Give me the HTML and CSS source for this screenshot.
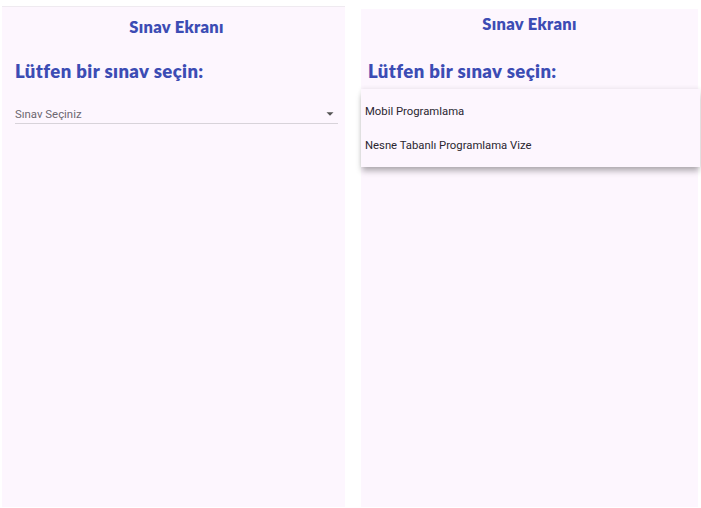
FILE: index.html
```html
<!DOCTYPE html>
<html lang="tr">
<head>
<meta charset="utf-8">
<title>Sınav Ekranı</title>
<link rel="stylesheet" href="styles.css">
</head>
<body>
  <div class="screens">
    <section class="panel panel-left">
      <h1 class="title">Sınav Ekranı</h1>
      <h2 class="heading">Lütfen bir sınav seçin:</h2>
      <div class="dropdown">
        <span class="dropdown-hint">Sınav Seçiniz</span>
        <svg class="dropdown-arrow" width="10" height="6" viewBox="0 0 10 6"><path d="M1.5 1.2 L8.5 1.2 L5 4.8 Z" fill="#555"/></svg>
      </div>
    </section>
    <section class="panel panel-right">
      <h1 class="title">Sınav Ekranı</h1>
      <h2 class="heading heading-right">Lütfen bir sınav seçin:</h2>
      <div class="menu">
        <div class="menu-item">Mobil Programlama</div>
        <div class="menu-item">Nesne Tabanlı Programlama Vize</div>
      </div>
    </section>
  </div>
</body>
</html>
```

FILE: styles.css
```css
html, body {
  margin: 0;
  padding: 0;
  background: #ffffff;
  height: 100%;
}
.screens {
  display: flex;
  align-items: flex-start;
  height: 508px;
}
.panel {
  background: #fdf6fe;
  box-sizing: border-box;
  position: relative;
}
.panel-left {
  margin-left: 2px;
  margin-top: 6px;
  width: 343px;
  height: 501px;
  border-top: 1px solid #efeaf0;
  padding: 0 7px 0 13px;
}
.panel-right {
  margin-left: 16px;
  margin-top: 9px;
  width: 337px;
  height: 498px;
  padding: 0 7px;
}
.title {
  margin: 0;
  text-align: center;
  font-family: "Lato", "Noto Sans", sans-serif;
  font-weight: 800;
  font-size: 16.5px;
  line-height: 20px;
  color: #3c4cb4;
  letter-spacing: 0.3px;
}
.panel-left .title {
  margin-top: 10px;
}
.panel-right .title {
  margin-top: 5px;
}
.heading {
  margin: 22px 0 0 0;
  font-family: "Lato", "Noto Sans", sans-serif;
  font-weight: 800;
  font-size: 18.5px;
  line-height: 24px;
  color: #3c4cb4;
  letter-spacing: 0.4px;
}
.heading-right {
  margin-top: 25px;
}
.dropdown {
  margin-top: 17px;
  height: 24px;
  box-sizing: border-box;
  padding-top: 4px;
  display: flex;
  align-items: center;
  justify-content: space-between;
  border-bottom: 1px solid #d8d3da;
  padding-right: 3px;
}
.dropdown-hint {
  font-family: "Roboto", sans-serif;
  font-size: 11.4px;
  color: #6c6770;
}
.dropdown-arrow {
  display: block;
}
.menu {
  position: absolute;
  left: 0;
  right: -2px;
  top: 80px;
  background: #fdf6fe;
  padding: 5px 0;
  box-shadow: 0 5px 6px -1px rgba(0, 0, 0, 0.3), 0 -1px 4px rgba(0, 0, 0, 0.07);
}
.menu-item {
  height: 34px;
  display: flex;
  align-items: center;
  padding-left: 4px;
  font-family: "Roboto", sans-serif;
  font-size: 11.3px;
  color: #2a2630;
}
```
